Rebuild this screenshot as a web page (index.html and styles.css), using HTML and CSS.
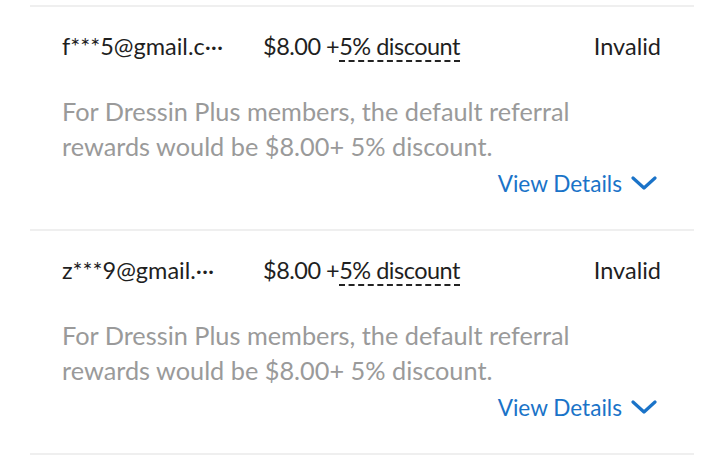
FILE: index.html
```html
<!DOCTYPE html>
<html>
<head>
<meta charset="utf-8">
<link rel="stylesheet" href="styles.css">
</head>
<body>
<div class="list">
  <div class="item">
    <div class="row">
      <span class="email">f***5@gmail.c···</span>
      <span class="reward">$8.00 +<span class="dash">5% discount</span></span>
      <span class="status">Invalid</span>
    </div>
    <p class="desc">For Dressin Plus members, the default referral rewards would be $8.00+ 5% discount.</p>
    <div class="more"><span>View Details</span><svg class="chev" width="26" height="16" viewBox="0 0 26 16"><path d="M2 3 L13 13 L24 3" fill="none" stroke="#1a73c8" stroke-width="3.2" stroke-linecap="round" stroke-linejoin="round"/></svg></div>
  </div>
  <div class="item">
    <div class="row">
      <span class="email">z***9@gmail.···</span>
      <span class="reward">$8.00 +<span class="dash">5% discount</span></span>
      <span class="status">Invalid</span>
    </div>
    <p class="desc">For Dressin Plus members, the default referral rewards would be $8.00+ 5% discount.</p>
    <div class="more"><span>View Details</span><svg class="chev" width="26" height="16" viewBox="0 0 26 16"><path d="M2 3 L13 13 L24 3" fill="none" stroke="#1a73c8" stroke-width="3.2" stroke-linecap="round" stroke-linejoin="round"/></svg></div>
  </div>
</div>
</body>
</html>
```
FILE: styles.css
```css
html, body {
  margin: 0;
  padding: 0;
  background: #ffffff;
}
body {
  font-family: "Lato", "Open Sans", sans-serif;
  color: #1f1f1f;
}
.list {
  margin: 5px 26px 0 30px;
  border-top: 2px solid #efefef;
}
.item {
  border-bottom: 2px solid #efefef;
  padding: 0 33px 0 32px;
  height: 224px;
  box-sizing: border-box;
}
.row {
  display: flex;
  align-items: center;
  height: 78px;
  font-size: 23.5px;
}
.email {
  width: 201px;
}
.reward {
  flex: 1;
  letter-spacing: -0.5px;
}
.dash {
  border-bottom: 2px dashed #222;
}
.status {
  text-align: right;
}
.desc {
  margin: 9px 0 0 0;
  font-size: 25.3px;
  line-height: 35px;
  color: #9a9a9a;
}
.more {
  display: flex;
  justify-content: flex-end;
  align-items: center;
  gap: 9px;
  height: 28px;
  margin-top: 5px;
  margin-right: 4px;
  font-size: 22.6px;
  color: #1a73c8;
}
.chev {
  display: block;
}
```
